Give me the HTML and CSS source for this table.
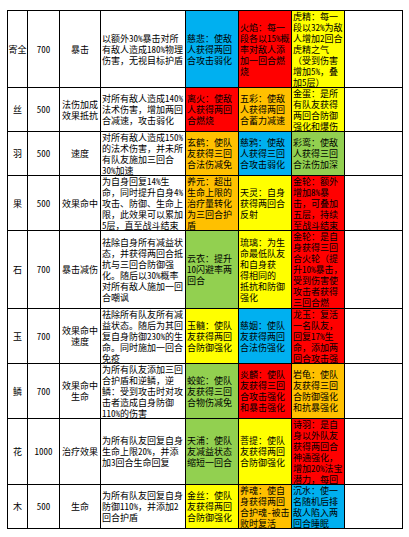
FILE: index.html
```html
<!DOCTYPE html>
<html>
<head>
<meta charset="utf-8">
<title>法宝表</title>
<link rel="stylesheet" href="styles.css">
</head>
<body>
<div class="sheet">
  <div class="c mid"><p>寄全</p></div>
  <div class="c mid n"><p>700</p></div>
  <div class="c mid"><p>暴击</p></div>
  <div class="c"><p>以额外<span class="n">30%</span>暴击对所<br>有敌人造成<span class="n">180%</span>物理<br>伤害，无视目标护盾</p></div>
  <div class="c blue"><p>慈悲：使敌<br>人获得两回<br>合攻击弱化</p></div>
  <div class="c red"><p>火焰：每一<br>段各以<span class="n">15%</span>概<br>率对敌人添<br>加一回合燃<br>烧</p></div>
  <div class="c yellow"><p>虎精：每一<br>段以<span class="n">32%</span>为敌<br>人增加<span class="n">2</span>回合<br>虎精之气<br>（受到伤害<br>增加<span class="n">5%</span>，叠<br>加<span class="n">5</span>层）</p></div>
  <div class="c"></div>

  <div class="c mid"><p>丝</p></div>
  <div class="c mid n"><p>500</p></div>
  <div class="c mid"><p>法伤加成<br>效果抵抗</p></div>
  <div class="c"><p>对所有敌人造成<span class="n">140%</span><br>法术伤害，增加两回<br>合减速，攻击弱化</p></div>
  <div class="c red"><p>离火：使敌<br>人获得两回<br>合燃烧</p></div>
  <div class="c orange"><p>五彩：使敌<br>人获得两回<br>合蓄力减速</p></div>
  <div class="c yellow"><p>金蛋：是所<br>有队友获得<br>两回合防御<br>强化和爆伤</p></div>
  <div class="c"></div>

  <div class="c mid"><p>羽</p></div>
  <div class="c mid n"><p>500</p></div>
  <div class="c mid"><p>速度</p></div>
  <div class="c"><p>对所有敌人造成<span class="n">150%</span><br>的法术伤害，并未所<br>有队友施加三回合<br><span class="n">30%</span>加速</p></div>
  <div class="c orange"><p>玄鹤：使队<br>友获得三回<br>合法伤减免</p></div>
  <div class="c blue"><p>慈鸦：使敌<br>人获得三回<br>合攻击弱化</p></div>
  <div class="c green"><p>彩鸾：使敌<br>人获得三回<br>合法伤加深</p></div>
  <div class="c"></div>

  <div class="c mid"><p>果</p></div>
  <div class="c mid n"><p>500</p></div>
  <div class="c mid"><p>效果命中</p></div>
  <div class="c"><p>为自身回复<span class="n">14%</span>生<br>命，同时提升自身<span class="n">4%</span><br>攻击、防御、生命上<br>限，此效果可以累加<br><span class="n">5</span>层，直至战斗结束</p></div>
  <div class="c orange"><p>养元：超出<br>生命上限的<br>治疗量转化<br>为三回合护<br>盾</p></div>
  <div class="c yellow"><p>天灵：自身<br>获得两回合<br>反射</p></div>
  <div class="c red"><p>金轮：额外<br>增加<span class="n">8%</span>暴<br>击，可叠加<br>五层，持续<br>至战斗结束</p></div>
  <div class="c"></div>

  <div class="c mid"><p>石</p></div>
  <div class="c mid n"><p>700</p></div>
  <div class="c mid"><p>暴击减伤</p></div>
  <div class="c"><p>祛除自身所有减益状<br>态，并获得两回合抵<br>抗与三回合防御强<br>化。随后以<span class="n">30%</span>概率<br>对所有敌人施加一回<br>合嘲讽</p></div>
  <div class="c green"><p>云衣：提升<br><span class="n">10</span>闪避率两<br>回合</p></div>
  <div class="c yellow"><p>琉璃：为生<br>命最低队友<br>和自身获<br>得相同的<br>抵抗和防御<br>强化</p></div>
  <div class="c red"><p>金轮：是自<br>身获得三回<br>合火轮（提<br>升<span class="n">10%</span>暴击，<br>受到伤害使<br>攻击者获得<br>三回合燃</p></div>
  <div class="c"></div>

  <div class="c mid"><p>玉</p></div>
  <div class="c mid n"><p>700</p></div>
  <div class="c mid"><p>效果命中<br>速度</p></div>
  <div class="c"><p>祛除所有队友所有减<br>益状态。随后为其回<br>复自身防御<span class="n">230%</span>的生<br>命。同时施加一回合<br>免疫</p></div>
  <div class="c yellow"><p>玉髓：使队<br>友获得两回<br>合防御强化</p></div>
  <div class="c blue"><p>慈姻：使队<br>友获得两回<br>合法伤强化</p></div>
  <div class="c red"><p>龙玉：复活<br>一名队友，<br>回复<span class="n">17%</span>生<br>命，添加两<br>回合攻击强</p></div>
  <div class="c"></div>

  <div class="c mid"><p>鳞</p></div>
  <div class="c mid n"><p>700</p></div>
  <div class="c mid"><p>效果命中<br>生命</p></div>
  <div class="c"><p>为所有队友添加三回<br>合护盾和逆鳞，逆<br>鳞：受到攻击时对攻<br>击者造成自身防御<br><span class="n">110%</span>的伤害</p></div>
  <div class="c green"><p>蛟蛇：使队<br>友获得三回<br>合物伤减免</p></div>
  <div class="c red"><p>炎麟：使队<br>友获得三回<br>合攻击强化<br>和暴击强化</p></div>
  <div class="c orange"><p>岩龟：使队<br>友获得三回<br>合防御强化<br>和抗暴强化</p></div>
  <div class="c"></div>

  <div class="c mid"><p>花</p></div>
  <div class="c mid n"><p>1000</p></div>
  <div class="c mid"><p>治疗效果</p></div>
  <div class="c"><p>为所有队友回复自身<br>生命上限<span class="n">20%</span>，并添<br>加<span class="n">3</span>回合生命回复</p></div>
  <div class="c green"><p>天浦：使队<br>友减益状态<br>缩短一回合</p></div>
  <div class="c yellow"><p>菩提：使队<br>友获得两回<br>合防御强化</p></div>
  <div class="c red"><p>诗羽：是自<br>身以外队友<br>获得两回合<br>神通强化，<br>增加<span class="n">20%</span>法宝<br>潜力，每回</p></div>
  <div class="c"></div>

  <div class="c mid"><p>木</p></div>
  <div class="c mid n"><p>500</p></div>
  <div class="c mid"><p>生命</p></div>
  <div class="c"><p>为所有队友回复自身<br>防御<span class="n">110%</span>，并添加<span class="n">2</span><br>回合护盾</p></div>
  <div class="c yellow"><p>金丝：使队<br>友获得两回<br>合防御强化</p></div>
  <div class="c orange"><p>养魂：使自<br>身获得两回<br>合护魂<span class="n">-</span>被击<br>败时复活</p></div>
  <div class="c blue"><p>沉水：使一<br>名随机后排<br>敌人陷入两<br>回合睡眠</p></div>
  <div class="c"></div>
</div>
</body>
</html>
```
FILE: styles.css
```css
html, body {
  margin: 0;
  padding: 0;
  background: #ffffff;
}

body {
  font-family: "Noto Sans CJK SC", "Noto Sans", sans-serif;
  font-size: 9px;
  line-height: 11px;
  color: #000;
}

.sheet {
  display: grid;
  width: max-content;
  margin: 10px 0 0 7px;
  padding: 1px;
  gap: 1px;
  background: #000;
  grid-template-columns: 19px 31px 40px 84px 52px 52px 52px 57px;
  grid-template-rows: 76px 43px 43px 54px 77px 54px 54px 65px 43px;
}

.c {
  background: #fff;
  display: flex;
  align-items: center;
  padding: 0 0 0 1px;
  white-space: nowrap;
  overflow: hidden;
}

.c p {
  margin: 0;
}

.mid {
  justify-content: center;
  text-align: center;
  padding: 0;
}

/* half-width digits, as in the sheet's font */
.n {
  font-feature-settings: "hwid" 1;
}

.blue { background: #00b0f0; }
.red { background: #ff0000; }
.yellow { background: #ffff00; }
.orange { background: #ffc000; }
.green { background: #92d050; }
```
